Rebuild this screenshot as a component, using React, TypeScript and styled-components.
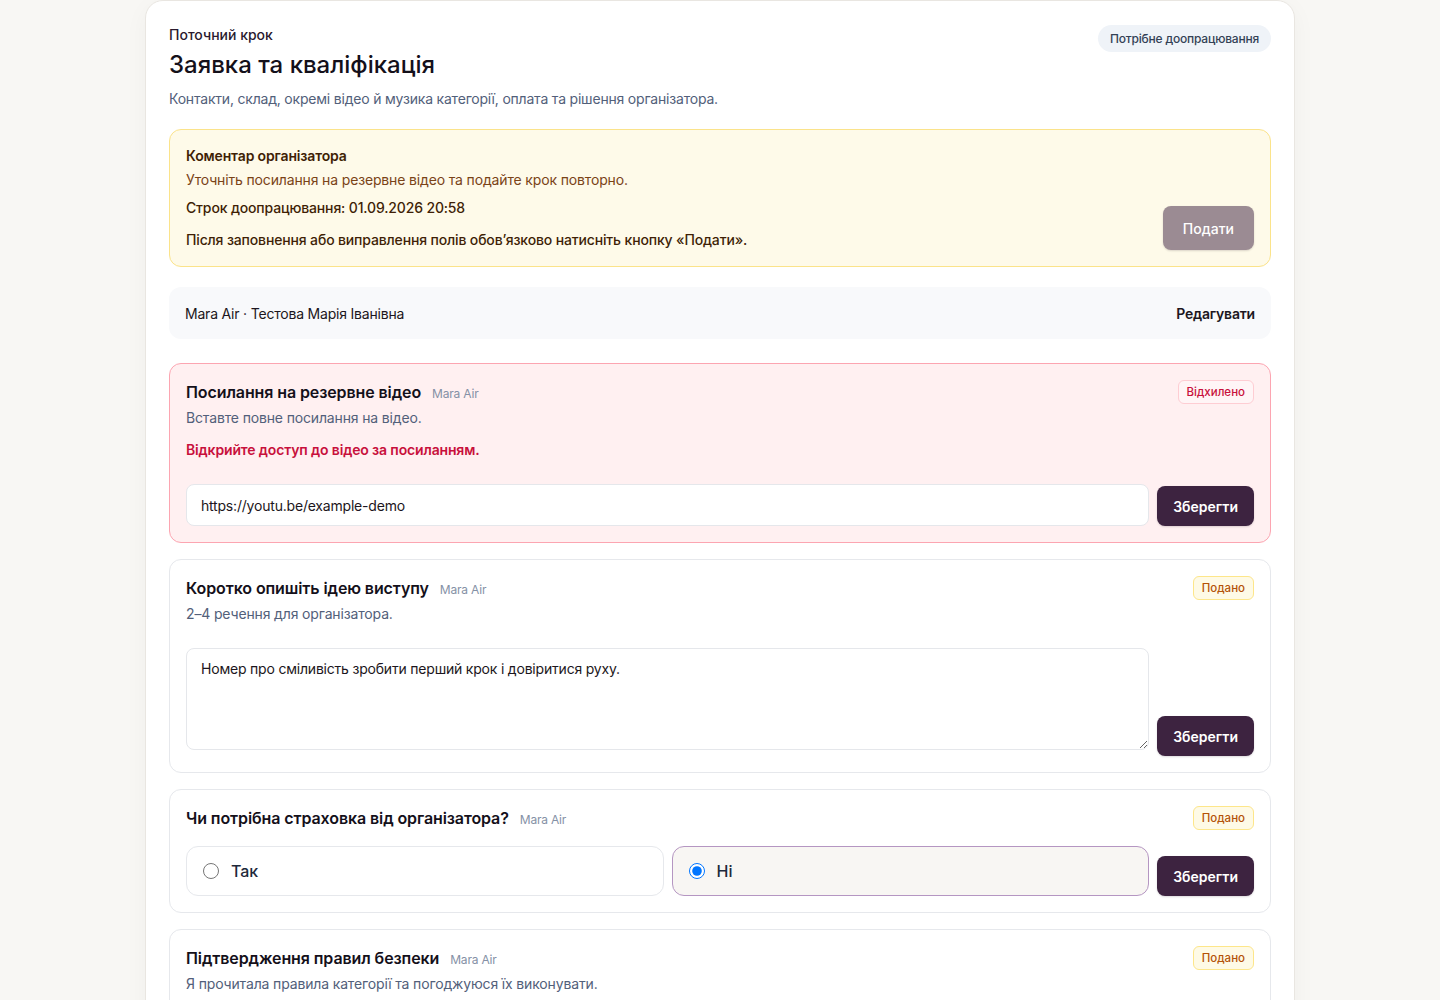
import React, { useState } from "react";
import styled, { createGlobalStyle, css } from "styled-components";

const GlobalStyle = createGlobalStyle`
  body {
    margin: 0;
    background: #f8f7f4;
    font-family: Inter, "Noto Sans", "Liberation Sans", sans-serif;
    color: #1c1620;
  }
  * { box-sizing: border-box; }
`;

const Page = styled.div`
  min-height: 100vh;
  padding: 0 0 40px;
`;

const StepCard = styled.section`
  width: 1150px;
  margin: 0 auto;
  background: #fff;
  border: 1px solid #e9e6e1;
  border-radius: 18px;
  padding: 24px 23px;
  box-shadow: 0 6px 24px rgba(60, 40, 30, 0.04);
`;

const StepHeader = styled.header`
  display: flex;
  justify-content: space-between;
  align-items: flex-start;
`;

const Eyebrow = styled.div`
  font-size: 14px;
  line-height: 20px;
  font-weight: 500;
  color: #2a1a2e;
`;

const StepTitle = styled.h1`
  margin: 4px 0 0;
  font-size: 24px;
  line-height: 32px;
  font-weight: 500;
  color: #14101a;
`;

const StepLead = styled.p`
  margin: 8px 0 0;
  font-size: 14px;
  line-height: 20px;
  color: #52607a;
  letter-spacing: -0.2px;
`;

const Pill = styled.span`
  display: inline-flex;
  align-items: center;
  height: 27px;
  padding: 0 12px;
  border-radius: 999px;
  background: #eff3f8;
  color: #334155;
  font-size: 12px;
  font-weight: 500;
  letter-spacing: -0.2px;
`;

const Notice = styled.div`
  margin-top: 20px;
  display: flex;
  align-items: flex-end;
  justify-content: space-between;
  padding: 16px;
  background: #fefae9;
  border: 1px solid #fbe38a;
  border-radius: 12px;
`;

const NoticeLine = styled.div<{ $weight?: number; $gap?: number; $tone?: string }>`
  font-size: 14px;
  line-height: 20px;
  font-weight: ${(p) => p.$weight ?? 400};
  margin-top: ${(p) => p.$gap ?? 0}px;
  color: ${(p) => p.$tone ?? "#3f1f06"};
  letter-spacing: -0.15px;
`;

const Button = styled.button<{ $muted?: boolean }>`
  flex: none;
  border: 0;
  border-radius: 8px;
  padding: 0 16px;
  height: 40px;
  font-family: inherit;
  font-size: 14px;
  font-weight: 600;
  color: #fff;
  background: #3d2340;
  box-shadow: 0 1px 2px rgba(20, 10, 20, 0.15);
  cursor: pointer;
  ${(p) =>
    p.$muted &&
    css`
      height: 44px;
      padding: 0 20px;
      font-weight: 500;
      background: #9b8b93;
      cursor: default;
    `}
`;

const ProfileRow = styled.div`
  margin-top: 20px;
  height: 52px;
  display: flex;
  align-items: center;
  justify-content: space-between;
  padding: 0 16px;
  background: #f8f9fb;
  border-radius: 12px;
  font-size: 14px;
  letter-spacing: -0.2px;
`;

const EditLink = styled.a`
  font-weight: 600;
  color: #1c1620;
  text-decoration: none;
`;

const Fields = styled.div`
  margin-top: 24px;
  display: flex;
  flex-direction: column;
  gap: 16px;
`;

type Tone = "rejected" | "default";

const FieldCard = styled.div<{ $tone: Tone }>`
  padding: 16px;
  border-radius: 12px;
  border: 1px solid ${(p) => (p.$tone === "rejected" ? "#fca5b1" : "#e6e8ec")};
  background: ${(p) => (p.$tone === "rejected" ? "#fff0f1" : "#fff")};
`;

const FieldTop = styled.div`
  display: flex;
  justify-content: space-between;
  align-items: flex-start;
`;

const TitleLine = styled.div`
  display: flex;
  align-items: baseline;
  gap: 11px;
  height: 24px;
`;

const FieldTitle = styled.span`
  font-size: 16px;
  line-height: 24px;
  font-weight: 600;
  color: #14101a;
  letter-spacing: -0.1px;
`;

const Owner = styled.span`
  font-size: 12px;
  line-height: 16px;
  color: #8591a6;
  letter-spacing: -0.2px;
`;

const Hint = styled.div`
  margin-top: 4px;
  font-size: 14px;
  line-height: 20px;
  color: #52607a;
  letter-spacing: -0.15px;
`;

const ErrorText = styled.div`
  margin-top: 12px;
  font-size: 14px;
  line-height: 20px;
  font-weight: 600;
  color: #c8103c;
  letter-spacing: -0.15px;
`;

const Status = styled.span<{ $kind: "rejected" | "sent" }>`
  display: inline-flex;
  align-items: center;
  height: 24px;
  padding: 0 8px;
  border-radius: 6px;
  font-size: 11.5px;
  font-weight: 500;
  ${(p) =>
    p.$kind === "rejected"
      ? css`
          color: #c8103c;
          background: #fff5f6;
          border: 1px solid #fecdd3;
        `
      : css`
          color: #b45309;
          background: #fefae6;
          border: 1px solid #fde68a;
        `}
`;

const InputRow = styled.div<{ $gap: number }>`
  margin-top: ${(p) => p.$gap}px;
  display: flex;
  align-items: flex-end;
  gap: 8px;
`;

const TextInput = styled.input`
  flex: 1;
  height: 42px;
  padding: 0 14px;
  border: 1px solid #e5e7eb;
  border-radius: 8px;
  background: #fff;
  font-family: inherit;
  font-size: 14px;
  color: #1c1620;
  letter-spacing: -0.2px;
  outline: none;
`;

const AreaWrap = styled.div`
  flex: 1;
  padding-bottom: 6px;
`;

const TextArea = styled.textarea`
  display: block;
  width: 100%;
  height: 102px;
  padding: 10px 14px;
  border: 1px solid #e5e7eb;
  border-radius: 8px;
  font-family: inherit;
  font-size: 14px;
  line-height: 20px;
  color: #1c1620;
  letter-spacing: -0.2px;
  outline: none;
  resize: vertical;
`;

const Choices = styled.div`
  flex: 1;
  display: grid;
  grid-template-columns: 1fr 1fr;
  gap: 8px;
`;

const Choice = styled.label<{ $on: boolean }>`
  height: 50px;
  display: flex;
  align-items: center;
  gap: 12px;
  padding: 0 16px;
  border-radius: 12px;
  border: 1px solid ${(p) => (p.$on ? "#b596c2" : "#e6e8ec")};
  background: ${(p) => (p.$on ? "#f8f6f3" : "#fff")};
  font-size: 16px;
  font-weight: 500;
  color: #1e293b;
  cursor: pointer;

  input {
    margin: 0;
    width: 16px;
    height: 16px;
  }
`;

const Badge = ({ kind }: { kind: "rejected" | "sent" }) => (
  <Status $kind={kind}>{kind === "rejected" ? "Відхилено" : "Подано"}</Status>
);

const Head = ({ title, kind }: { title: string; kind: "rejected" | "sent" }) => (
  <FieldTop>
    <TitleLine>
      <FieldTitle>{title}</FieldTitle>
      <Owner>Mara Air</Owner>
    </TitleLine>
    <Badge kind={kind} />
  </FieldTop>
);

export default function App() {
  const [link, setLink] = useState("https://youtu.be/example-demo");
  const [idea, setIdea] = useState(
    "Номер про сміливість зробити перший крок і довіритися руху."
  );
  const [insurance, setInsurance] = useState<"yes" | "no">("no");

  return (
    <Page>
      <GlobalStyle />
      <StepCard>
        <StepHeader>
          <div>
            <Eyebrow>Поточний крок</Eyebrow>
            <StepTitle>Заявка та кваліфікація</StepTitle>
            <StepLead>
              Контакти, склад, окремі відео й музика категорії, оплата та рішення організатора.
            </StepLead>
          </div>
          <Pill>Потрібне доопрацювання</Pill>
        </StepHeader>

        <Notice>
          <div>
            <NoticeLine $weight={600}>Коментар організатора</NoticeLine>
            <NoticeLine $gap={4} $tone="#7a4317">
              Уточніть посилання на резервне відео та подайте крок повторно.
            </NoticeLine>
            <NoticeLine $gap={8} $weight={500}>
              Строк доопрацювання: 01.09.2026 20:58
            </NoticeLine>
            <NoticeLine $gap={12} $weight={500}>
              Після заповнення або виправлення полів обов’язково натисніть кнопку «Подати».
            </NoticeLine>
          </div>
          <Button $muted disabled>
            Подати
          </Button>
        </Notice>

        <ProfileRow>
          <span>Mara Air · Тестова Марія Іванівна</span>
          <EditLink href="#">Редагувати</EditLink>
        </ProfileRow>

        <Fields>
          <FieldCard $tone="rejected">
            <Head title="Посилання на резервне відео" kind="rejected" />
            <Hint>Вставте повне посилання на відео.</Hint>
            <ErrorText>Відкрийте доступ до відео за посиланням.</ErrorText>
            <InputRow $gap={24}>
              <TextInput value={link} onChange={(e) => setLink(e.target.value)} />
              <Button>Зберегти</Button>
            </InputRow>
          </FieldCard>

          <FieldCard $tone="default">
            <Head title="Коротко опишіть ідею виступу" kind="sent" />
            <Hint>2–4 речення для організатора.</Hint>
            <InputRow $gap={24}>
              <AreaWrap>
                <TextArea value={idea} onChange={(e) => setIdea(e.target.value)} />
              </AreaWrap>
              <Button>Зберегти</Button>
            </InputRow>
          </FieldCard>

          <FieldCard $tone="default">
            <Head title="Чи потрібна страховка від організатора?" kind="sent" />
            <InputRow $gap={16}>
              <Choices>
                <Choice $on={insurance === "yes"}>
                  <input
                    type="radio"
                    name="insurance"
                    checked={insurance === "yes"}
                    onChange={() => setInsurance("yes")}
                  />
                  Так
                </Choice>
                <Choice $on={insurance === "no"}>
                  <input
                    type="radio"
                    name="insurance"
                    checked={insurance === "no"}
                    onChange={() => setInsurance("no")}
                  />
                  Ні
                </Choice>
              </Choices>
              <Button>Зберегти</Button>
            </InputRow>
          </FieldCard>

          <FieldCard $tone="default">
            <Head title="Підтвердження правил безпеки" kind="sent" />
            <Hint>Я прочитала правила категорії та погоджуюся їх виконувати.</Hint>
            <InputRow $gap={24}>
              <Choices>
                <Choice $on={false}>
                  <input type="checkbox" />
                  Підтверджую
                </Choice>
              </Choices>
              <Button>Зберегти</Button>
            </InputRow>
          </FieldCard>
        </Fields>
      </StepCard>
    </Page>
  );
}
